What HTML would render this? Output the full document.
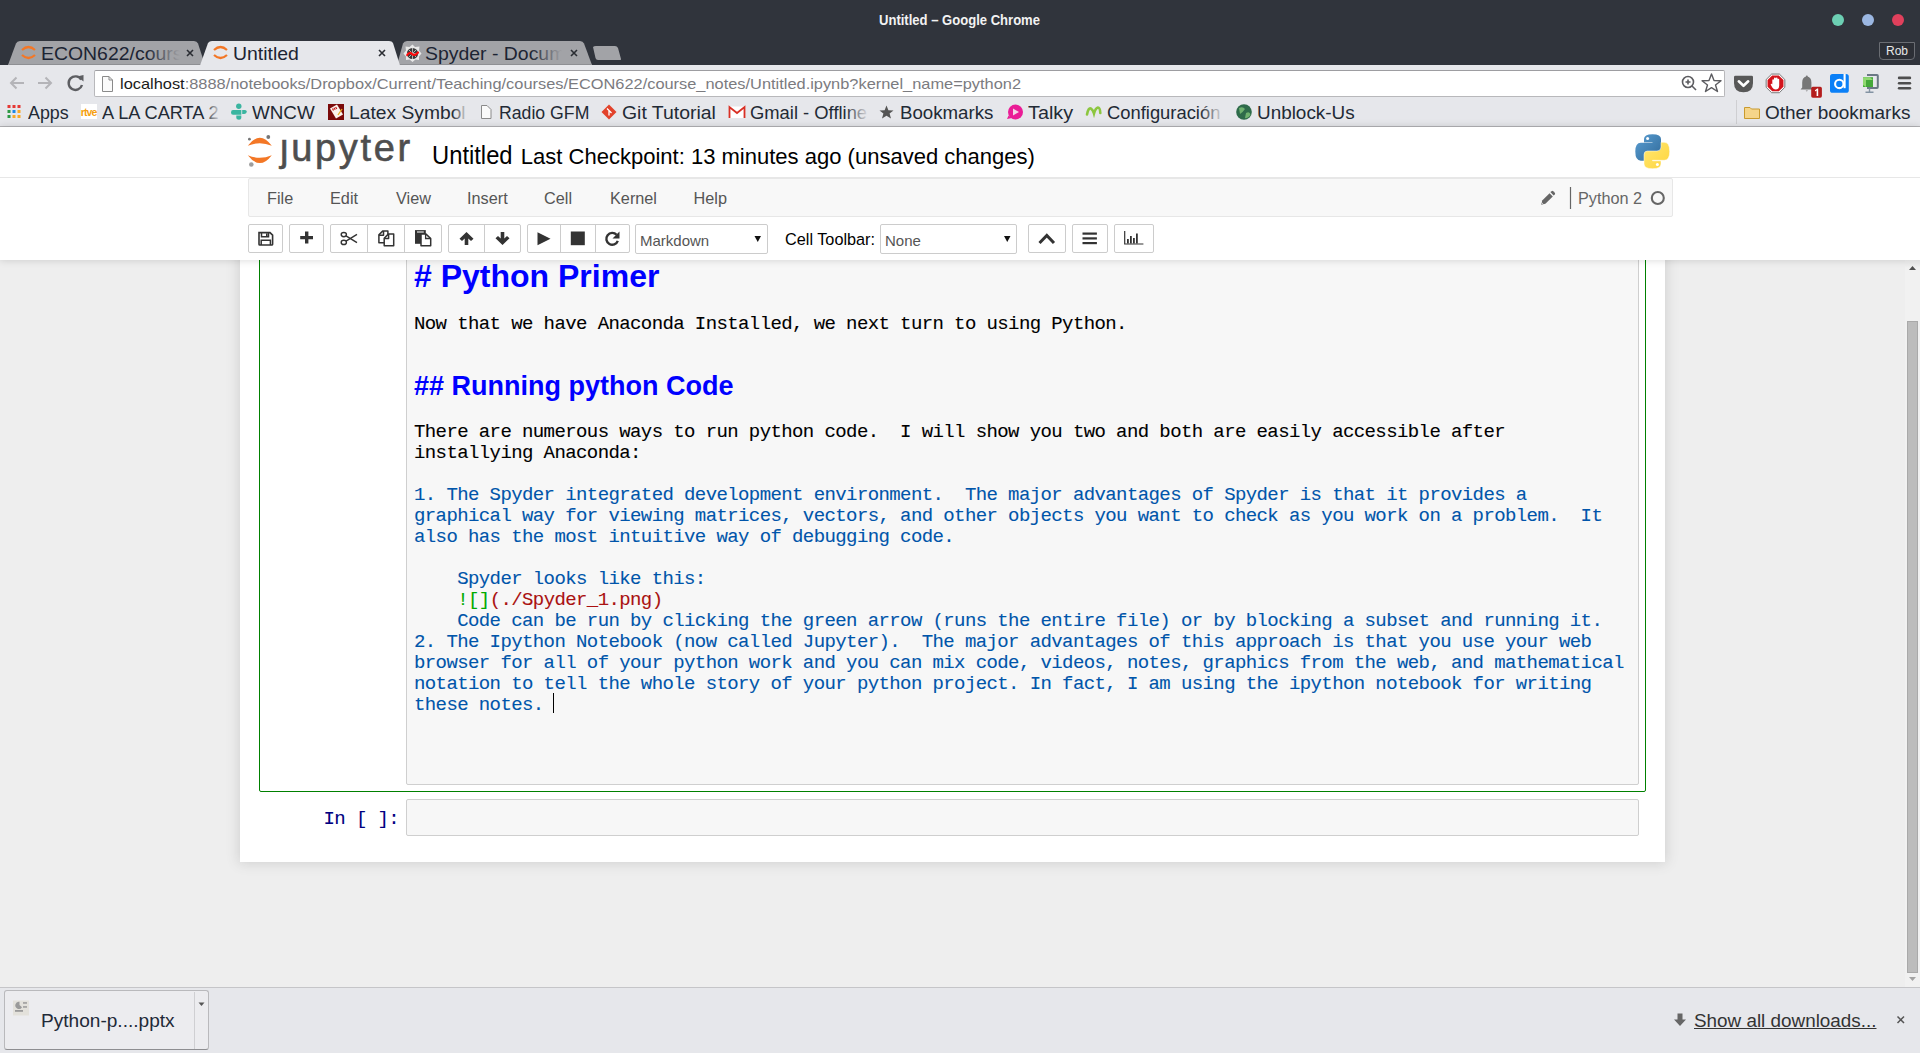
<!DOCTYPE html>
<html><head><meta charset="utf-8">
<style>
*{margin:0;padding:0;box-sizing:border-box}
html,body{width:1920px;height:1053px;overflow:hidden;background:#eeeeee;font-family:"Liberation Sans",sans-serif}
.a{position:absolute}
.t{position:absolute;white-space:pre;line-height:1}
#titlebar{left:0;top:0;width:1920px;height:65px;background:#30343c}
#toolbar{left:0;top:65px;width:1920px;height:34px;background:#e6e7eb}
#bmbar{left:0;top:98px;width:1920px;height:29px;background:#e6e7eb;border-bottom:1px solid #b4b4b7}
.mono{font-family:"Liberation Mono",monospace;font-size:19px !important;letter-spacing:-0.6px;-webkit-text-stroke:0.1px currentColor}
.bm{position:absolute;top:105px;font-size:17.5px;color:#222a35;white-space:pre;line-height:1}
.btn{top:224px;height:29px;background:#fff;border:1px solid #ccc;border-radius:2px}
.vd{top:225px;width:1px;height:27px;background:#ccc}
.dot{position:absolute;width:12px;height:12px;border-radius:50%;top:14px}
</style></head><body>
<!-- ===== CHROME ===== -->
<div id="titlebar" class="a"></div>
<div class="t" style="left:879px;top:13px;font-size:14.5px;font-weight:bold;color:#f2f2f2;transform:scaleX(0.9);transform-origin:0 0">Untitled – Google Chrome</div>
<div class="dot" style="left:1832px;background:#6ccfb3"></div>
<div class="dot" style="left:1862px;background:#9bb7e2"></div>
<div class="dot" style="left:1892px;background:#e0405c"></div>
<div class="a" style="left:1879px;top:42px;width:36px;height:18px;border:1px solid #6a6d73;border-radius:0 0 4px 4px;background:#2c2f36"></div>
<div class="t" style="left:1886px;top:45px;font-size:12px;color:#e8e8e8">Rob</div>

<!-- tabs -->
<svg class="a" style="left:0;top:38px" width="640" height="28">
  <path d="M8 27 L16 5.5 Q17 3 20 3 L194 3 Q197 3 198 5.5 L205 27 Z" fill="#a2a3a7"/><path d="M8 26.5 L205 26.5" stroke="#8e8f93" stroke-width="1"/>
  <path d="M397 27 L403 5.5 Q404 3 407 3 L580 3 Q583 3 584 5.5 L592 27 Z" fill="#a2a3a7"/><path d="M397 26.5 L592 26.5" stroke="#8e8f93" stroke-width="1"/>
  <path d="M200 27.5 L208 5 Q209.5 3 212 3 L389 3 Q392 3 393 5 L400 27.5 Z" fill="#e6e7eb"/>
  <path d="M593 9 Q594 8 596 8 L615 8 Q617 8 618 10 L621 21 Q621.5 22 620 22 L598 22 Q596 22 595.5 20 Z" fill="#a2a3a7"/>
</svg>
<div class="a" style="left:41px;top:41px;width:140px;height:23px;overflow:hidden"><div class="t" style="left:0;top:3.9px;font-size:18.5px;color:#1c2433;transform:scaleX(1.05);transform-origin:0 0">ECON622/course_notes</div></div>
<div class="t" style="left:233px;top:44.9px;font-size:18.5px;color:#1c2433;transform:scaleX(1.05);transform-origin:0 0">Untitled</div>
<div class="a" style="left:425px;top:41px;width:138px;height:23px;overflow:hidden"><div class="t" style="left:0;top:3.9px;font-size:18.5px;color:#1c2433;transform:scaleX(1.05);transform-origin:0 0">Spyder - Documentation</div></div>
<div class="a" style="left:146px;top:43px;width:36px;height:20px;background:linear-gradient(90deg,rgba(162,163,167,0),#a2a3a7 95%)"></div>
<div class="a" style="left:530px;top:43px;width:34px;height:20px;background:linear-gradient(90deg,rgba(162,163,167,0),#a2a3a7 95%)"></div>
<svg class="a" style="left:0;top:38px" width="640" height="28">
  <g fill="none" stroke="#f37726" stroke-width="2.2">
   <path d="M22 12 Q28.5 6 35 12"/><path d="M22 17 Q28.5 23 35 17"/>
   <path d="M214 12 Q220.5 6 227 12"/><path d="M214 17 Q220.5 23 227 17"/>
  </g>
  <g stroke="#2a2d33" stroke-width="1.6">
   <path d="M187 12 L193 18 M193 12 L187 18"/>
   <path d="M379 12 L385 18 M385 12 L379 18"/>
   <path d="M571 12 L577 18 M577 12 L571 18"/>
  </g>
  <path d="M412.5 6.5 L415 9 L419.5 8.5 L419 12.5 L421.5 15.5 L419 18.5 L419 22 L415.5 21.5 L412.5 24 L409.5 21.5 L406 22 L406 18.5 L403.5 15.5 L406 12.5 L405.5 8.5 L409.5 9 Z" fill="#e8e8e8"/>
  <circle cx="412.5" cy="15.5" r="5.6" fill="#3a3a3a"/>
  <path d="M407 15.5 H418 M412.5 10 V21 M408.6 11.6 L416.4 19.4 M416.4 11.6 L408.6 19.4" stroke="#cfcfcf" stroke-width="0.8"/>
  <path d="M407.2 17 Q409.5 13.5 412 16 Q414.5 18.5 418 14.5" fill="none" stroke="#ff0a0a" stroke-width="2.2" stroke-linecap="round"/>
</svg>

<!-- toolbar -->
<div id="toolbar" class="a"></div>
<svg class="a" style="left:0;top:64px" width="100" height="35">
  <g fill="none" stroke="#b4b4b8" stroke-width="2">
    <path d="M24 19 L11 19 M16.5 13.5 L11 19 L16.5 24.5"/>
    <path d="M38 19 L51 19 M45.5 13.5 L51 19 L45.5 24.5"/>
  </g>
  <path d="M81.2 15.5 A6.8 6.8 0 1 0 82 21" fill="none" stroke="#5d5e62" stroke-width="2.4"/>
  <path d="M77 12.5 L83.5 11 L83.5 17.5 Z" fill="#5d5e62"/>
</svg>
<div class="a" style="left:94px;top:70px;width:1631px;height:27px;background:#fff;border:1px solid #b8b8bb;border-top-color:#9d9da1;border-radius:2px"></div>
<svg class="a" style="left:99px;top:72px" width="20" height="24">
  <path d="M3.5 4.5 L10 4.5 L13.5 8 L13.5 19.5 L3.5 19.5 Z" fill="#fafafa" stroke="#8a8a8a" stroke-width="1"/>
  <path d="M10 4.5 L10 8 L13.5 8" fill="none" stroke="#8a8a8a" stroke-width="1"/>
</svg>
<div class="t" style="left:120px;top:76px;font-size:15px;color:#1b1b1b;transform:scaleX(1.092);transform-origin:0 0">localhost<span style="color:#7b7b7f">:8888/notebooks/Dropbox/Current/Teaching/courses/ECON622/course_notes/Untitled.ipynb?kernel_name=python2</span></div>
<svg class="a" style="left:1670px;top:64px" width="250" height="35">
  <g fill="none" stroke="#5c5c60" stroke-width="1.6">
    <circle cx="18" cy="18" r="5.5"/><path d="M22 22 L26 26"/><path d="M15.5 18 L20.5 18 M18 15.5 L18 20.5"/>
  </g>
  <path d="M41.5 10 L44 16.5 L51 16.8 L45.5 21 L47.5 27.5 L41.5 23.6 L35.5 27.5 L37.5 21 L32 16.8 L39 16.5 Z" fill="none" stroke="#5c5c60" stroke-width="1.4" stroke-linejoin="round"/>
  <path d="M64 13 Q64 11.7 65.5 11.7 H81.5 Q83 11.7 83 13 V19 Q83 28.3 73.5 28.3 Q64 28.3 64 19 Z" fill="#585858"/>
  <path d="M68.8 17.3 L73.5 21.8 L78.2 17.3" fill="none" stroke="#fff" stroke-width="2.6" stroke-linecap="round" stroke-linejoin="round"/>
  <path d="M114.83,23.27 L109.37,28.73 L101.63,28.73 L96.17,23.27 L96.17,15.53 L101.63,10.07 L109.37,10.07 L114.83,15.53 Z" fill="#fff" stroke="#6a6a6a" stroke-width="0.9"/>
  <path d="M113.45,22.69 L108.79,27.35 L102.21,27.35 L97.55,22.69 L97.55,16.11 L102.21,11.45 L108.79,11.45 L113.45,16.11 Z" fill="#d3141c"/>
  <path d="M102.3 22.5 V16.3 Q102.3 15.3 103.2 15.3 Q104 15.3 104 16.3 V19 V14.6 Q104 13.6 104.9 13.6 Q105.8 13.6 105.8 14.6 V18.8 V14.4 Q105.8 13.4 106.7 13.4 Q107.6 13.4 107.6 14.4 V19 V15.6 Q107.6 14.7 108.4 14.7 Q109.2 14.7 109.2 15.6 V21.5 Q109.2 25.5 105.6 25.5 Q103.6 25.5 102.3 23.5 L100.8 20.8 Q100.5 19.8 101.3 19.7 Q102 19.6 102.3 20.5 Z" fill="#fff"/>
  <path d="M136.8 12.6 Q141.4 13 141.4 18.6 V23.6 L143 25.6 H130.6 L132.2 23.6 V18.6 Q132.2 13 136.8 12.6 Z" fill="#777"/>
  <circle cx="136.8" cy="12.4" r="1" fill="#777"/><path d="M135.6 26.4 H138 L136.8 27.6 Z" fill="#777"/>
  <rect x="141.2" y="22.8" width="10.7" height="10.9" rx="1.6" fill="#b41d1d"/>
  <path d="M145 26.2 L147.2 24.6 H148.2 V32 H146.6 V26.6 L145 27.6 Z" fill="#fff"/>
  <rect x="160" y="10" width="18.8" height="18.8" rx="2.6" fill="#0b80f7"/>
  <circle cx="169.3" cy="19.9" r="4.2" fill="none" stroke="#fff" stroke-width="2.1"/>
  <path d="M174.6 10 V24.2" stroke="#fff" stroke-width="2.1"/>
  <path d="M197 11 H207 Q207.8 11 207.8 11.8 V23 Q207.8 24 207 24 H197" fill="none" stroke="#6b7885" stroke-width="2"/>
  <rect x="193" y="13.2" width="10" height="9.8" fill="#45a83a"/><path d="M193 13.2 H200 L203 16 H196 Z M193 13.2 V21 L196 23 V16 Z" fill="#8fd870"/>
  <path d="M199.5 24.5 V27.5 M195.5 28.2 H203.5" stroke="#8393a3" stroke-width="1.4"/>
  <rect x="227.8" y="12.6" width="13.4" height="2.6" rx="1.3" fill="#4e4e4e"/><rect x="227.8" y="18" width="13.4" height="2.6" rx="1.3" fill="#4e4e4e"/><rect x="227.8" y="23" width="13.4" height="2.6" rx="1.3" fill="#4e4e4e"/>
</svg>

<!-- bookmarks -->
<div id="bmbar" class="a"></div>
<svg class="a" style="left:0;top:98px" width="1920" height="28">
  <g>
    <rect x="7.5" y="7" width="3" height="3" fill="#e53935"/><rect x="12.5" y="7" width="3" height="3" fill="#e53935"/><rect x="17.5" y="7" width="3" height="3" fill="#e53935"/>
    <rect x="7.5" y="12" width="3" height="3" fill="#2e9a45"/><rect x="12.5" y="12" width="3" height="3" fill="#1e88e5"/><rect x="17.5" y="12" width="3" height="3" fill="#f9a825"/>
    <rect x="7.5" y="17" width="3" height="3" fill="#2e9a45"/><rect x="12.5" y="17" width="3" height="3" fill="#f9a825"/><rect x="17.5" y="17" width="3" height="3" fill="#f9a825"/>
  </g>
  <rect x="81" y="6" width="16" height="15" fill="#fff"/>
  <text x="80.8" y="17.6" font-size="10.5" font-weight="bold" fill="#f5a00f" font-family="Liberation Sans" letter-spacing="-0.9">rtve</text>
  <g fill="#3ab5a0"><circle cx="238.8" cy="8.2" r="2.7"/><path d="M233 12 H241.3 V16.8 H233 Q231 16.8 231 14.4 Q231 12 233 12 Z"/><path d="M242.2 12 H245 Q246.7 12 246.7 13.6 Q246.7 16 244 16 H242.2 Z"/><path d="M236.3 17.4 H241.3 V20 Q241.3 21.8 239 21.8 Q236.3 21.8 236.3 20 Z"/></g>
  <rect x="328" y="6" width="16" height="16" fill="#7a0a0a"/><path d="M330 10.5 L337 6.5 L343 16.5 L336 20.5 Z" fill="#fbf3ee"/><path d="M332.5 10.5 L333.5 12.5 M334 9.8 L335.2 11.8 M335.6 9 L336.8 11" stroke="#c21818" stroke-width="1.2"/><path d="M342 11 L338 17" stroke="#e8b020" stroke-width="1.3"/>
  <path d="M481.5 7.5 L487 7.5 L491 11.5 L491 20.5 L481.5 20.5 Z" fill="#fafafa" stroke="#8a8a8a"/>
  <path d="M609 6.5 L616.5 14 L609 21.5 L601.5 14 Z" fill="#e2422b"/><path d="M607 10.5 L611.5 15 M609 12.5 L609 17.5" stroke="#fff" stroke-width="1.3"/>
  <path d="M729 8.5 L745 8.5 L745 20 L729 20 Z" fill="#fff"/><path d="M729.5 20 L729.5 9 L737 15 L744.5 9 L744.5 20" fill="none" stroke="#d93025" stroke-width="1.8"/>
  <path d="M886.5 7.5 L888.4 12.3 L893.5 12.5 L889.6 15.6 L891 20.5 L886.5 17.7 L882 20.5 L883.4 15.6 L879.5 12.5 L884.6 12.3 Z" fill="#555"/>
  <circle cx="1015.5" cy="14" r="7.5" fill="#ea1c96"/><path d="M1013 10.5 L1019 14 L1013 17.5 Z" fill="#f3d6e6"/><path d="M1008.5 17.5 L1007 21 L1012 20 Z" fill="#ea1c96"/>
  <path d="M1087 16.5 Q1088.5 9 1091 10.5 Q1093 12 1094 15.5 Q1095.5 10 1098 9.5 Q1100 9.5 1100.3 15" fill="none" stroke="#8cc63f" stroke-width="2.6" stroke-linecap="round"/>
  <circle cx="1244" cy="14" r="7.8" fill="#2e6b4a"/><path d="M1239 10 Q1243 8 1245 11 Q1243 14 1240 16 Z M1246 15 Q1250 13 1250.5 17 Q1248 21 1245 20 Z" fill="#6fb26f"/>
  <path d="M1736.5 2 L1736.5 26" stroke="#cfcfd2"/>
  <path d="M1744.5 9.5 L1750 9.5 L1751.5 11 L1759.5 11 L1759.5 20.5 L1744.5 20.5 Z" fill="#f5d58a" stroke="#c99a2e" stroke-width="1"/>
</svg>
<div class="bm" style="left:28px;transform:scaleX(1.02);transform-origin:0 0">Apps</div>
<div class="bm" style="left:102px;transform:scaleX(1.04);transform-origin:0 0">A LA CARTA 2</div>
<div class="bm" style="left:252px;transform:scaleX(1.075);transform-origin:0 0">WNCW</div>
<div class="bm" style="left:349px;transform:scaleX(1.1);transform-origin:0 0">Latex Symbol</div>
<div class="bm" style="left:499px;transform:scaleX(1.01);transform-origin:0 0">Radio GFM</div>
<div class="bm" style="left:622px;transform:scaleX(1.11);transform-origin:0 0">Git Tutorial</div>
<div class="bm" style="left:750px;transform:scaleX(1.05);transform-origin:0 0">Gmail - Offline</div>
<div class="bm" style="left:900px;transform:scaleX(1.066);transform-origin:0 0">Bookmarks</div>
<div class="bm" style="left:1028px;transform:scaleX(1.13);transform-origin:0 0">Talky</div>
<div class="bm" style="left:1107px;transform:scaleX(1.05);transform-origin:0 0">Configuración</div>
<div class="bm" style="left:1257px;transform:scaleX(1.08);transform-origin:0 0">Unblock-Us</div>
<div class="bm" style="left:1765px;transform:scaleX(1.083);transform-origin:0 0">Other bookmarks</div>

<div class="a" style="left:205px;top:101px;width:16px;height:24px;background:linear-gradient(90deg,rgba(230,231,235,0),#e6e7eb)"></div>
<div class="a" style="left:452px;top:101px;width:16px;height:24px;background:linear-gradient(90deg,rgba(230,231,235,0),#e6e7eb)"></div>
<div class="a" style="left:845px;top:101px;width:24px;height:24px;background:linear-gradient(90deg,rgba(230,231,235,0),#e6e7eb)"></div>
<div class="a" style="left:1200px;top:101px;width:24px;height:24px;background:linear-gradient(90deg,rgba(230,231,235,0),#e6e7eb)"></div>
<!-- ===== PAGE ===== -->
<div class="a" style="left:0;top:127px;width:1906px;height:861px;background:#eeeeee"></div>
<!-- notebook container -->
<div class="a" style="left:240px;top:200px;width:1425px;height:662px;background:#fff;box-shadow:0 0 12px 1px rgba(87,87,87,0.2)"></div>
<!-- selected cell -->
<div class="a" style="left:259px;top:230px;width:1387px;height:562px;border:1px solid #008000;border-radius:2px"></div>
<div class="a" style="left:406px;top:230px;width:1233px;height:555px;background:#f7f7f7;border:1px solid #cfcfcf;border-radius:2px"></div>
<div class="a" style="left:406px;top:799px;width:1233px;height:37px;background:#f7f7f7;border:1px solid #cfcfcf;border-radius:2px"></div>
<div class="t mono" style="left:323.5px;top:810px;font-size:18px;color:#000080">In [ ]:</div>
<!-- cell text -->
<div class="t" style="left:414px;top:260px;font-size:32px;font-weight:bold;color:#0000ff"># Python Primer</div>
<div class="t mono" style="left:414px;top:315px;font-size:18px;color:#000">Now that we have Anaconda Installed, we next turn to using Python.</div>
<div class="t" style="left:414px;top:373px;font-size:27px;font-weight:bold;color:#0000ff">## Running python Code</div>
<div class="t mono" style="left:414px;top:422px;font-size:18px;color:#000;line-height:21px">There are numerous ways to run python code.  I will show you two and both are easily accessible after
installying Anaconda:</div>
<div class="t mono" style="left:414px;top:485px;font-size:18px;color:#0055aa;line-height:21px">1. The Spyder integrated development environment.  The major advantages of Spyder is that it provides a
graphical way for viewing matrices, vectors, and other objects you want to check as you work on a problem.  It
also has the most intuitive way of debugging code.

    Spyder looks like this:
    <span style="color:#00aa00">![]</span><span style="color:#aa1111">(./Spyder_1.png)</span>
    Code can be run by clicking the green arrow (runs the entire file) or by blocking a subset and running it.
2. The Ipython Notebook (now called Jupyter).  The major advantages of this approach is that you use your web
browser for all of your python work and you can mix code, videos, notes, graphics from the web, and mathematical
notation to tell the whole story of your python project. In fact, I am using the ipython notebook for writing
these notes. </div>
<div class="a" style="left:553px;top:693px;width:1px;height:20px;background:#000"></div>

<!-- jupyter header -->
<div class="a" style="left:0;top:127px;width:1920px;height:133px;background:#fff;box-shadow:0 0 8px rgba(0,0,0,0.16)"></div>
<div class="a" style="left:0;top:177px;width:1920px;height:1px;background:#e7e7e7"></div>
<svg class="a" style="left:240px;top:126px" width="180" height="50">
  <path d="M7.8 19.8 Q19.8 3.8 31.8 19.8 Q19.8 14.5 7.8 19.8 Z" fill="#f37726"/>
  <path d="M7.8 29.2 Q19.8 45 31.8 29.2 Q19.8 34.5 7.8 29.2 Z" fill="#f37726"/>
  <circle cx="9.4" cy="13.2" r="1.4" fill="#767677"/>
  <circle cx="28.3" cy="11" r="1.9" fill="#767677"/>
  <circle cx="11.3" cy="38.5" r="2.3" fill="#9e9e9e"/>
</svg>
<div class="t" style="left:280px;top:129px;font-size:38px;color:#4e4e4e;letter-spacing:2.7px;-webkit-text-stroke:0.6px #4e4e4e">ȷupyter</div>
<div class="t" style="left:432px;top:143px;font-size:25.4px;color:#000;transform:scaleX(0.936);transform-origin:0 0">Untitled</div>
<div class="t" style="left:520.8px;top:146px;font-size:22.03px;color:#000">Last Checkpoint: 13 minutes ago (unsaved changes)</div>
<svg class="a" style="left:1635px;top:134px" width="36" height="36">
  <defs>
   <linearGradient id="gb" x1="0" y1="0" x2="1" y2="1"><stop offset="0" stop-color="#5a9fd4"/><stop offset="1" stop-color="#306998"/></linearGradient>
   <linearGradient id="gy" x1="0" y1="0" x2="1" y2="1"><stop offset="0" stop-color="#ffe873"/><stop offset="1" stop-color="#ffd43b"/></linearGradient>
  </defs>
  <path d="M9 8.2 V5 Q9 0.3 17.5 0.3 Q26 0.3 26 5 V14.5 Q26 18 22.5 18 H13 Q9 18 9 22 V26.7 H5.8 Q0.3 26.7 0.3 17.5 Q0.3 8.7 5.8 8.7 H17.5 V8.2 Z" fill="url(#gb)"/>
  <path d="M26 26.8 V30 Q26 34.7 17.5 34.7 Q9 34.7 9 30 V20.5 Q9 17 12.5 17 H22 Q26 17 26 13 V8.3 H29.2 Q34.7 8.3 34.7 17.5 Q34.7 26.3 29.2 26.3 H17.5 V26.8 Z" fill="url(#gy)" stroke="#fff" stroke-width="0.5"/>
  <circle cx="12.6" cy="4.4" r="1.5" fill="#fff"/>
  <circle cx="22.4" cy="30.6" r="1.5" fill="#fff"/>
</svg>
<!-- menubar -->
<div class="a" style="left:248px;top:178px;width:1425px;height:39px;background:#f8f8f8;border:1px solid #e7e7e7;border-radius:2px"></div>
<div class="t" style="left:267px;top:190px;font-size:16.25px;color:#555">File</div>
<div class="t" style="left:330px;top:190px;font-size:16.25px;color:#555">Edit</div>
<div class="t" style="left:396px;top:190px;font-size:16.25px;color:#555">View</div>
<div class="t" style="left:467px;top:190px;font-size:16.25px;color:#555">Insert</div>
<div class="t" style="left:544px;top:190px;font-size:16.25px;color:#555">Cell</div>
<div class="t" style="left:610px;top:190px;font-size:16.25px;color:#555">Kernel</div>
<div class="t" style="left:693.5px;top:190px;font-size:16.25px;color:#555">Help</div>
<svg class="a" style="left:1535px;top:185px" width="140" height="28">
  <path d="M6.2 19.8 L7.2 15.6 L14.6 8.2 L17.8 11.4 L10.4 18.8 Z" fill="#666"/><path d="M15.5 7.3 L16.6 6.2 Q17.4 5.5 18.2 6.2 L19.8 7.8 Q20.5 8.6 19.8 9.4 L18.7 10.5 Z" fill="#666"/>
  <path d="M6.6 17.5 L8.5 19.4" stroke="#f8f8f8" stroke-width="0.8"/>
  <path d="M35.5 2 L35.5 24" stroke="#666" stroke-width="1.2"/>
  <circle cx="122.8" cy="13" r="6" fill="none" stroke="#666" stroke-width="2.1"/>
</svg>
<div class="t" style="left:1578px;top:190px;font-size:16.25px;color:#666">Python 2</div>

<!-- toolbar buttons -->
<div class="a btn" style="left:248px;width:35px"></div>
<div class="a btn" style="left:289px;width:35px"></div>
<div class="a btn" style="left:330px;width:112px"></div>
<div class="a vd" style="left:367px"></div><div class="a vd" style="left:404px"></div>
<div class="a btn" style="left:448px;width:73px"></div>
<div class="a vd" style="left:484px"></div>
<div class="a btn" style="left:527px;width:103px"></div>
<div class="a vd" style="left:560px"></div><div class="a vd" style="left:595px"></div>
<div class="a btn" style="left:635px;width:133px;height:30px"></div>
<div class="t" style="left:640px;top:233px;font-size:15px;color:#555">Markdown</div>
<div class="t" style="left:785px;top:231px;font-size:16.25px;color:#000">Cell Toolbar:</div>
<div class="a btn" style="left:880px;width:137px;height:30px"></div>
<div class="t" style="left:885px;top:233px;font-size:15px;color:#555">None</div>
<div class="a btn" style="left:1028px;width:38px"></div>
<div class="a btn" style="left:1072px;width:36px"></div>
<div class="a btn" style="left:1114px;width:40px"></div>
<svg class="a" style="left:240px;top:220px" width="920" height="40">
 <g fill="#333">
  <!-- save -->
  <path d="M19 12.6 H30 L32.6 15.2 V24.2 Q32.6 25 31.8 25 H19.8 Q19 25 19 24.2 Z" fill="none" stroke="#333" stroke-width="1.6"/>
  <path d="M21.5 12.6 V16.8 H28.5 V12.6" fill="none" stroke="#333" stroke-width="1.5"/>
  <rect x="26" y="13.4" width="1.6" height="2.6" fill="#333"/>
  <path d="M21.2 25 V20.2 H30.4 V25" fill="none" stroke="#333" stroke-width="1.5"/>
  <!-- plus -->
  <path d="M65 11.6 H68.4 V15.9 H73 V19.3 H68.4 V23.6 H65 V19.3 H60.2 V15.9 H65 Z"/>
  <!-- scissors -->
  <g fill="none" stroke="#333" stroke-width="1.4"><ellipse cx="103.8" cy="14.6" rx="2.6" ry="2.1"/><ellipse cx="103.8" cy="22.4" rx="2.6" ry="2.1"/><path d="M106 15.8 L117 22.6 M106 21.2 L117 14.4"/></g>
  <!-- copy -->
  <g fill="none" stroke="#333" stroke-width="1.5" stroke-linejoin="round">
   <path d="M142.9 10.9 H147.9 V22.7 H138.9 V14.9 Z" fill="#fff"/><path d="M138.9 15.2 H143.5 V10.9"/>
   <path d="M148.5 13.9 H153.7 V25.8 H144.2 V18.2 Z" fill="#fff"/><path d="M144.2 18.5 H148.6 V13.9"/>
  </g>
  <!-- paste -->
  <rect x="175" y="10.1" width="10.8" height="13.7" fill="#333"/><rect x="177" y="11.3" width="6.8" height="1.4" fill="#ccc"/>
  <path d="M181 14.1 H186 L190.7 18.5 V25.8 H181 Z" fill="#fff" stroke="#333" stroke-width="1.5" stroke-linejoin="round"/>
  <path d="M185.6 14.1 V18.5 H190.7" fill="none" stroke="#333" stroke-width="1.3"/>
  <!-- up -->
  <path d="M226.5 12 L233.5 18.7 L231 21.1 L228.3 18.4 V25 H224.7 V18.4 L222 21.1 L219.5 18.7 Z"/>
  <!-- down -->
  <path d="M262.5 25 L269.5 18.3 L267 15.9 L264.3 18.6 V12 H260.7 V18.6 L258 15.9 L255.5 18.3 Z"/>
  <!-- play -->
  <path d="M297.5 12.2 L310.5 18.8 L297.5 25.2 Z"/>
  <!-- stop -->
  <rect x="330.8" y="11.5" width="14" height="13.7"/>
  <!-- refresh -->
  <path d="M376.6 14.8 A5.9 5.9 0 1 0 377.8 20.8" fill="none" stroke="#333" stroke-width="2.4"/>
  <path d="M379.5 11.5 V18.5 H372.5 Z"/>
  <!-- select arrows -->
  <path d="M514.5 16 L521 16 L517.75 22 Z" fill="#111"/>
  <path d="M764 16 L770.5 16 L767.25 22 Z" fill="#111"/>
  <!-- chevron up -->
  <path d="M799.5 23 L806.8 15.5 L814 23" fill="none" stroke="#333" stroke-width="3"/>
  <!-- list -->
  <rect x="842.5" y="12.5" width="14.4" height="2.2"/><rect x="842.5" y="17.3" width="14.4" height="2.2"/><rect x="842.5" y="22" width="14.4" height="2.2"/>
  <!-- chart -->
  <path d="M884.7 11 V24 H903.4" fill="none" stroke="#333" stroke-width="1.2"/>
  <rect x="887" y="19" width="1.8" height="4.5"/><rect x="890" y="16" width="1.8" height="7.5"/><rect x="893" y="18" width="1.8" height="5.5"/><rect x="896" y="13.5" width="1.8" height="10"/>
 </g>
</svg>

<!-- scrollbar -->
<div class="a" style="left:1905px;top:260px;width:15px;height:727px;background:#f1f1f1"></div>
<svg class="a" style="left:1905px;top:260px" width="15" height="727">
  <path d="M4 10 L7.5 6 L11 10 Z" fill="#505050"/>
  <path d="M4 717 L7.5 721 L11 717 Z" fill="#a3a3a3"/>
</svg>
<div class="a" style="left:1905px;top:260px;width:15px;height:8px;background:linear-gradient(rgba(0,0,0,0.08),rgba(0,0,0,0))"></div>
<div class="a" style="left:1907px;top:321px;width:11px;height:652px;background:#bcbcbc;border:1px solid #a9a9a9"></div>
<!-- download shelf -->
<div class="a" style="left:0;top:987px;width:1920px;height:66px;background:#e6e7eb;border-top:1px solid #c5c5c8"></div>
<div class="a" style="left:4px;top:990px;width:205px;height:60px;background:#ececef;border:1px solid #b9b9bc;border-bottom-color:#8e8e91;border-radius:3px"></div>
<div class="a" style="left:194px;top:992px;width:1px;height:57px;background:#cfcfd2"></div>
<svg class="a" style="left:0;top:987px" width="220" height="66">
  <rect x="13" y="13.5" width="16" height="15" fill="#e3e1db"/>
  <path d="M19.5 14.8 A3.6 3.6 0 1 0 22 20.2 L19.5 18 Z" fill="#9a9a9a"/>
  <rect x="23" y="15.2" width="4" height="1.5" fill="#9a9a9a"/><rect x="23" y="19.2" width="4" height="1.5" fill="#9a9a9a"/><rect x="15" y="23" width="8" height="1.8" fill="#9a9a9a"/>
  <path d="M198.5 15.6 L204.5 15.6 L201.5 19 Z" fill="#555"/>
</svg>
<div class="t" style="left:41px;top:1013px;font-size:17.5px;color:#1f2a38;transform:scaleX(1.09);transform-origin:0 0">Python-p....pptx</div>
<svg class="a" style="left:1660px;top:1005px" width="260" height="30">
  <path d="M17.5 8.5 H22.5 V14.5 H26 L20 21 L14 14.5 H17.5 Z" fill="#666"/>
  <path d="M237.5 11.5 L244 18 M244 11.5 L237.5 18" stroke="#555" stroke-width="1.5"/>
</svg>
<div class="t" style="left:1694px;top:1013px;font-size:17.5px;color:#333;text-decoration:underline;transform:scaleX(1.078);transform-origin:0 0">Show all downloads...</div>
</body></html>
